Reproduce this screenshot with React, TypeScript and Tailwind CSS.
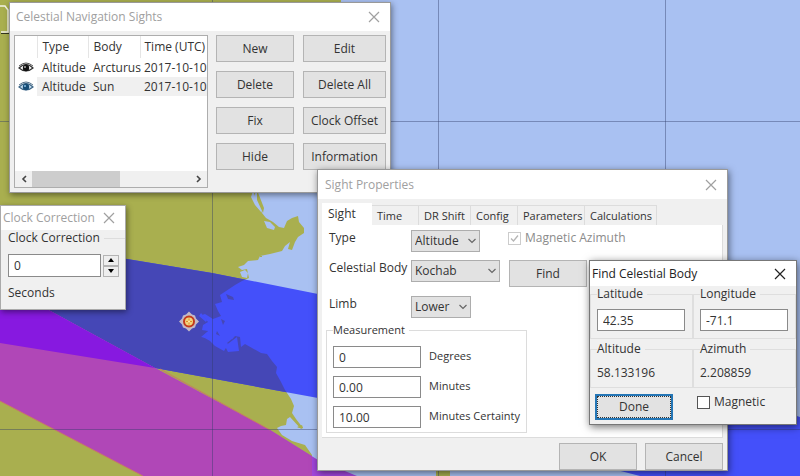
import type { ReactNode } from "react";

const COAST =
  "M0 0H341V60H320V120H300V160L261 180 256 191 254 197 258 205 262 213 266 218 273 222 279 227 284 228 287 221 292 218 298 216 299 222 304 228 304 233 298 237 295 242 292 250 288 249 290 242 285 246 282 251 270 254 260 256 258 260 248 261 244 265 238 267 242 270 247 269 249 278 242 281 235 285 226 291 220 295 222 302 215 304 218 311 221 316 213 319 205 314 202 315 208 322 203 325 202 330 208 331 203 337 210 341 215 346 224 351 229 343 235 336 240 337 241 347 245 344 252 348 261 353 267 354 272 361 277 367 276 373 281 382 285 390 291 399 294 406 292 413 296 419 303 428 301 429 290 417 287 419 286 425 281 426 277 428 282 435 292 441 305 445 312 455V476H0Z";

const BLUE_BAND = "M0 236 127 259 212 273 318 294Q570 345 800 417V476H640Q480 434 318 398L155 368 0 343Z";
const MAGENTA_BAND = "M0 284 45 308 155 368 270 430 318 460 357 476H143L0 401Z";

function Chart() {
  return (
    <svg aria-hidden="true" className="absolute inset-0 h-full w-full" viewBox="0 0 800 476" preserveAspectRatio="xMinYMin slice">
      <defs>
        <clipPath id="land"><path d={COAST} /></clipPath>
        <clipPath id="blue"><path d={BLUE_BAND} /></clipPath>
      </defs>
      <rect width="800" height="476" fill="#a9c1f2" />
      <path d={COAST} fill="#a9af4f" />
      <path d="M253 191l4 11 5 6-1 4-6-7-4-8ZM264 221l6 1 5 5-1 3-7-2ZM240 272l5-2 3 3-1 5-5-1Z" fill="#a9c1f2" />
      <path d="M257 190l7 18-1 5-6-13ZM436 466h14v10h-14ZM256 258h2v2h-2ZM260 256h2v1h-2ZM297 427l5-2 1 3h-4Z" fill="#a9af4f" />
      <path d={BLUE_BAND} fill="#4450fa" />
      <g clipPath="url(#land)"><path d={BLUE_BAND} fill="#4547b6" /></g>
      <path d="M226 294l7 3 1 3-6-1ZM221 319l4 2-2 4ZM217 331l3 5-4-2ZM227 343l5-4-1 7Z" fill="#4547b6" />
      <path d="M201 313l6 7-1 2-7-6ZM207 332l-6 5 5 1ZM225 346l12-9 2 14-11 1Z" fill="#4450fa" />
      <path d={MAGENTA_BAND} fill="#a246dc" />
      <g clipPath="url(#land)"><path d={MAGENTA_BAND} fill="#b047b7" /></g>
      <g clipPath="url(#blue)"><path d={MAGENTA_BAND} fill="#8719e0" /></g>
      <path d="M160 369 270 430 M0 401 143 476" fill="none" stroke="#c67b64" strokeWidth="1" />
      <path d="M212.500 0V476M438.500 0V476M665.500 0V476M0 121.500H800M0 429.500H800" stroke="#303c68" strokeOpacity=".42" />
      <path d="M0 6H5L8 10V32H1" fill="none" stroke="#f4f4e8" strokeWidth="1.500" />
      <path d="M1 33.500H9" stroke="#34361c" />
      <g transform="translate(189 321.500)">
        <path d="M0-10 3-7 6-6 7-3 10 0 7 3 6 6 3 7 0 10-3 7-6 6-7 3-10 0-7-3-6-6-3-7Z" fill="#c4b9c5" />
        <circle r="5" fill="#f2d37a" stroke="#c43a1d" strokeWidth="2" />
        <path d="M-3 0H3M0-3V3" stroke="#e28a2b" />
        <circle r="1" fill="#fff4b0" />
      </g>
    </svg>
  );
}

function TitleBar({ title, className, active = false }: { title: string; className: string; active?: boolean }) {
  return (
    <header className={`flex items-center justify-between bg-white ${active ? "text-[#222]" : "text-[#a0a0a0]"} ${className}`}>
      <h2 className="whitespace-nowrap">{title}</h2>
      <button type="button" aria-label={`Close ${title}`}>
        <svg className="block h-3 w-3" viewBox="0 0 12 12" fill="none" stroke="currentColor" strokeWidth="1.200">
          <path d="M1 1 11 11M11 1 1 11" />
        </svg>
      </button>
    </header>
  );
}

function PushButton({ children, className = "" }: { children: ReactNode; className?: string }) {
  return (
    <button type="button" className={`h-[27px] border border-[#b4b4b4] bg-[#e2e2e2] text-center whitespace-nowrap ${className}`}>
      {children}
    </button>
  );
}

function Eye({ blue = false }: { blue?: boolean }) {
  return (
    <svg role="img" aria-label="Visible" className="h-3 w-4" viewBox="0 0 16 12">
      <path d="M1 6Q8-1 15 6 8 12 1 6Z" fill={blue ? "#c8e1f2" : "#fff"} stroke={blue ? "#3f6787" : "#333"} strokeWidth="1.200" />
      <circle cx="8" cy="6" r="3.200" fill={blue ? "#174d76" : "#111"} />
      <path d="M1 4Q8-2 15 4" fill="none" stroke={blue ? "#55728a" : "#555"} />
      <circle cx="7" cy="5" r="1" fill={blue ? "#88bfe5" : "#aaa"} />
    </svg>
  );
}

function Arrow({ d }: { d: string }) {
  return (
    <svg className="block h-2 w-2" viewBox="0 0 8 8" fill="none" stroke="#444" strokeWidth="1.600"><path d={d} /></svg>
  );
}

function SightsWindow() {
  const head = "border-r border-[#e5e5e5] pl-[5px] text-left font-normal";
  return (
    <section className="absolute top-[2px] left-[9px] w-[382px] border border-[#999] bg-[#f0f0f0] pb-1 shadow-[1px_2px_6px_rgba(0,0,0,0.45)]">
      <TitleBar title="Celestial Navigation Sights" className="h-7 pr-[10px] pl-[6px]" />
      <div className="flex gap-2 pt-1 pr-1 pl-1">
        <div className="flex h-[153px] w-[194px] flex-col justify-between border border-[#adadad] bg-white">
          <table className="w-full table-fixed border-collapse whitespace-nowrap">
            <colgroup><col className="w-[22px]" /><col className="w-[51px]" /><col className="w-[52px]" /><col /></colgroup>
            <thead>
              <tr className="h-[22px]">
                <th className={head} aria-label="Visibility" />
                <th className={head}>Type</th><th className={head}>Body</th>
                <th className="pl-1 text-left font-normal">Time (UTC)</th>
              </tr>
            </thead>
            <tbody>
              <tr className="h-[19px]">
                <td className="pl-[3px]"><Eye /></td><td className="pl-[5px]">Altitude</td><td className="pl-[5px]">Arcturus</td>
                <td className="pl-1">2017-10-10</td>
              </tr>
              <tr className="h-[19px]">
                <td className="pl-[3px]"><Eye blue /></td><td className="bg-[#f0f0f0] pl-[5px]">Altitude</td><td className="bg-[#f0f0f0] pl-[5px]">Sun</td>
                <td className="bg-[#f0f0f0] pl-1">2017-10-10</td>
              </tr>
            </tbody>
          </table>
          <div className="flex h-4 items-center bg-[#f0f0f0]">
            <button type="button" aria-label="Scroll left" className="flex w-[17px] justify-center"><Arrow d="M6 1 3 4 6 7" /></button>
            <div className="h-full w-[88px] bg-[#cdcdcd]" />
            <button type="button" aria-label="Scroll right" className="ml-auto flex w-[17px] justify-center"><Arrow d="M2 1 5 4 2 7" /></button>
          </div>
        </div>
        <div className="grid grow grid-cols-[78px_1fr] content-start gap-x-[9px] gap-y-[9px]">
          <PushButton>New</PushButton><PushButton>Edit</PushButton>
          <PushButton>Delete</PushButton><PushButton>Delete All</PushButton>
          <PushButton>Fix</PushButton><PushButton>Clock Offset</PushButton>
          <PushButton>Hide</PushButton><PushButton>Information</PushButton>
        </div>
      </div>
    </section>
  );
}

function ClockWindow() {
  const spin = "flex h-[11px] w-4 items-center justify-center border border-[#b4b4b4] bg-[#eee]";
  return (
    <section className="absolute top-[205px] left-0 w-[126px] border border-[#aaa] bg-[#f0f0f0] pb-2 shadow-[1px_2px_6px_rgba(0,0,0,0.45)]">
      <TitleBar title="Clock Correction" className="h-6 pr-[10px] pl-[2px]" />
      <div className="flex items-center gap-1 pl-[7px]">
        <label htmlFor="clock" className="leading-4 whitespace-nowrap">Clock Correction</label>
        <div className="h-px grow bg-[#ddd]" />
      </div>
      <div className="mt-2 flex items-center gap-[2px] pl-[7px]">
        <input id="clock" defaultValue="0" className="h-[23px] w-[93px] border border-[#8a8a8a] bg-white px-[5px]" />
        <div className="flex flex-col">
          <button type="button" aria-label="Increase" className={spin}>
            <svg className="h-1 w-[6px]" viewBox="0 0 6 4"><path d="M0 4 3 0 6 4Z" /></svg>
          </button>
          <button type="button" aria-label="Decrease" className={spin}>
            <svg className="h-1 w-[6px]" viewBox="0 0 6 4"><path d="M0 0H6L3 4Z" /></svg>
          </button>
        </div>
      </div>
      <p className="mt-2 pl-[7px] leading-4">Seconds</p>
    </section>
  );
}

function Choice({ id, value, className }: { id: string; value: string; className: string }) {
  return (
    <div className={`relative ${className}`}>
      <select id={id} defaultValue={value} className="h-[22px] w-full appearance-none border border-[#adadad] bg-[#e2e2e2] pl-[3px]">
        <option>{value}</option>
      </select>
      <svg className="pointer-events-none absolute top-2 right-1 h-[6px] w-2" viewBox="0 0 8 6" fill="none" stroke="#666" strokeWidth="1.200">
        <path d="M.5 1 4 4.500 7.500 1" />
      </svg>
    </div>
  );
}

const MEASURES = [
  { id: "deg", value: "0", label: "Degrees" },
  { id: "min", value: "0.00", label: "Minutes" },
  { id: "cert", value: "10.00", label: "Minutes Certainty" },
];

function PropertiesWindow() {
  const tab = "h-5 border-t border-r border-[#dcdcdc] text-left pl-[5px] whitespace-nowrap";
  return (
    <section className="absolute top-[169px] left-[317px] w-[411px] border border-[#999] bg-[#f0f0f0] shadow-[1px_2px_7px_rgba(0,0,0,0.5)]">
      <TitleBar title="Sight Properties" className="h-[29px] pr-[10px] pl-[7px]" />
      <div role="tablist" className="flex items-end pt-1 pl-1 text-[11px]">
        <button role="tab" aria-selected="true" type="button" className="h-[22px] w-[50px] bg-white pl-[6px] text-left text-[12px]">Sight</button>
        <button role="tab" type="button" className={`w-[47px] ${tab}`}>Time</button>
        <button role="tab" type="button" className={`w-[52px] ${tab}`}>DR Shift</button>
        <button role="tab" type="button" className={`w-[47px] ${tab}`}>Config</button>
        <button role="tab" type="button" className={`w-[67px] ${tab}`}>Parameters</button>
        <button role="tab" type="button" className={`w-[72px] ${tab}`}>Calculations</button>
      </div>
      <div className="mr-1 ml-1 border-r border-b border-[#dcdcdc] bg-white pt-[5px] pb-1 pl-1">
        <div className="grid grid-cols-[82px_auto] items-start pl-[3px]">
          <label htmlFor="type" className="leading-4">Type</label>
          <div className="flex h-[30px] gap-7">
            <Choice id="type" value="Altitude" className="w-[69px]" />
            <label className="flex h-4 items-center gap-1 text-[#8b8b8b]">
              <span className="relative h-[13px] w-[13px]">
                <input type="checkbox" defaultChecked disabled className="block h-[13px] w-[13px] appearance-none border border-[#ccc] bg-white" />
                <svg className="absolute top-0 left-0 h-[13px] w-[13px]" viewBox="0 0 13 13" fill="none" stroke="#b5b5b5" strokeWidth="1.300"><path d="M3 6.500 5.500 9 10 3.500" /></svg>
              </span>
              Magnetic Azimuth
            </label>
          </div>
          <label htmlFor="body" className="leading-4 whitespace-nowrap">Celestial Body</label>
          <div className="flex h-9 gap-[9px]">
            <Choice id="body" value="Kochab" className="w-[89px]" />
            <PushButton className="w-[78px]">Find</PushButton>
          </div>
          <label htmlFor="limb" className="leading-4">Limb</label>
          <Choice id="limb" value="Lower" className="w-[60px]" />
        </div>
        <fieldset className="mt-1 w-[201px] min-w-0 border border-[#dcdcdc] px-[6px] pb-1">
          <legend className="pr-1 text-[11px] leading-4">Measurement</legend>
          <div className="flex flex-col gap-2 pt-2">
            {MEASURES.map((m) => (
              <div key={m.id} className="flex gap-2">
                <input id={m.id} defaultValue={m.value} className="h-[22px] w-[88px] shrink-0 border border-[#8a8a8a] bg-white px-[5px]" />
                <label htmlFor={m.id} className="text-[11px] leading-5 whitespace-nowrap">{m.label}</label>
              </div>
            ))}
          </div>
        </fieldset>
      </div>
      <div className="flex justify-end gap-2 pt-[5px] pr-1">
        <PushButton className="w-[78px]">OK</PushButton>
        <PushButton className="w-[78px]">Cancel</PushButton>
      </div>
    </section>
  );
}

function GroupBox({ title, htmlFor, children, className }: { title: string; htmlFor: string; children: ReactNode; className: string }) {
  return (
    <fieldset className={`min-w-0 border border-[#dedede] pl-[6px] ${className}`}>
      <legend className="pr-1 leading-4"><label htmlFor={htmlFor}>{title}</label></legend>
      {children}
    </fieldset>
  );
}

function FindWindow() {
  const field = "mt-[7px] block h-[22px] w-[88px] border border-[#8a8a8a] bg-white px-[5px]";
  return (
    <section className="absolute top-[260px] left-[589px] w-[208px] border border-[#777] bg-[#f0f0f0] pb-1 shadow-[1px_2px_8px_rgba(0,0,0,0.55)]">
      <TitleBar title="Find Celestial Body" active className="h-[25px] pr-[10px] pl-[2px]" />
      <div className="grid grid-cols-2 gap-y-[2px]">
        <GroupBox title="Latitude" htmlFor="lat" className="h-[53px]"><input id="lat" defaultValue="42.35" className={field} /></GroupBox>
        <GroupBox title="Longitude" htmlFor="lon" className="h-[53px]"><input id="lon" defaultValue="-71.1" className={field} /></GroupBox>
        <GroupBox title="Altitude" htmlFor="alt" className="h-[47px]"><output id="alt" className="mt-2 block leading-4">58.133196</output></GroupBox>
        <GroupBox title="Azimuth" htmlFor="azi" className="h-[47px]"><output id="azi" className="mt-2 block leading-4">2.208859</output></GroupBox>
      </div>
      <div className="flex items-start gap-6 pt-[6px] pl-[5px]">
        <button type="button" className="h-[26px] w-[78px] border-2 border-[#2476b6] bg-[#e2e2e2] outline-1 -outline-offset-3 outline-[#333] outline-dotted">Done</button>
        <label className="flex h-4 items-center gap-1">
          <input type="checkbox" className="h-[13px] w-[13px] appearance-none border border-[#555] bg-white" />
          Magnetic
        </label>
      </div>
    </section>
  );
}

export default function App() {
  return (
    <main className="relative min-h-screen w-full overflow-hidden bg-[#a9c1f2] font-['Open_Sans','Noto_Sans',sans-serif] text-[12px] leading-4 text-[#333]">
      <Chart />
      <SightsWindow />
      <ClockWindow />
      <PropertiesWindow />
      <FindWindow />
    </main>
  );
}
